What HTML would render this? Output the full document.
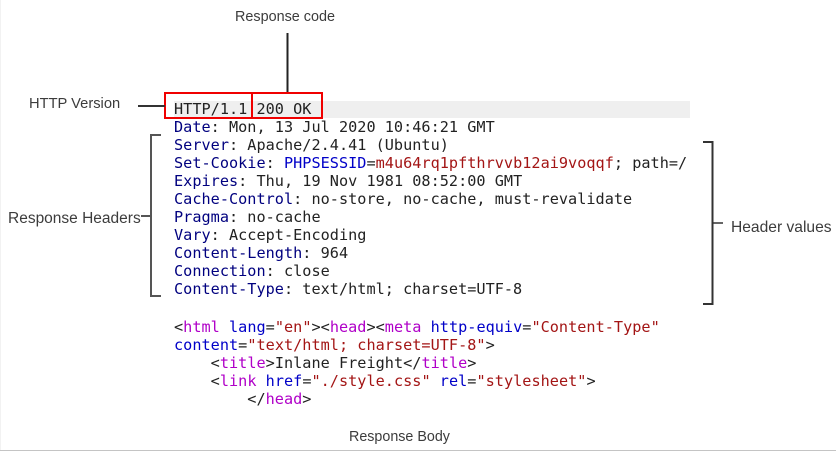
<!DOCTYPE html>
<html>
<head>
<meta charset="utf-8">
<style>
html,body{margin:0;padding:0;background:#fff;}
#p{position:relative;width:836px;height:451px;overflow:hidden;background:#fff;}
.m{position:absolute;left:174px;font:15.2px/18px "DejaVu Sans Mono",monospace;letter-spacing:.02px;color:#222;white-space:pre;filter:blur(.25px);}
.h{color:#00007f;}
.t{color:#b000c8;}
.a{color:#0000c8;}
.v{color:#a31515;}
.l{position:absolute;font-family:"Liberation Sans",sans-serif;line-height:18px;color:#3c3c3c;white-space:pre;filter:blur(.2px);}
svg{position:absolute;left:0;top:0;}
#g{position:absolute;left:174px;top:101px;width:516px;height:17px;background:#efefef;}
</style>
</head>
<body>
<div id="p">
<div id="g"></div>
<div class="l" style="left:235px;top:8px;font-size:14.4px">Response code</div>
<div class="l" style="left:29px;top:95px;font-size:14.7px">HTTP Version</div>
<div class="l" style="left:8px;top:210px;font-size:15.5px">Response Headers</div>
<div class="l" style="left:731px;top:219px;font-size:15.6px">Header values</div>
<div class="l" style="left:349px;top:428px;font-size:14.3px">Response Body</div>

<div class="m" style="top:100px">HTTP/1.1 200 OK</div>
<div class="m" style="top:118px"><span class="h">Date</span>: Mon, 13 Jul 2020 10:46:21 GMT</div>
<div class="m" style="top:136px"><span class="h">Server</span>: Apache/2.4.41 (Ubuntu)</div>
<div class="m" style="top:154px"><span class="h">Set-Cookie</span>: <span class="a">PHPSESSID</span>=<span class="v">m4u64rq1pfthrvvb12ai9voqqf</span>; path=/</div>
<div class="m" style="top:172px"><span class="h">Expires</span>: Thu, 19 Nov 1981 08:52:00 GMT</div>
<div class="m" style="top:190px"><span class="h">Cache-Control</span>: no-store, no-cache, must-revalidate</div>
<div class="m" style="top:208px"><span class="h">Pragma</span>: no-cache</div>
<div class="m" style="top:226px"><span class="h">Vary</span>: Accept-Encoding</div>
<div class="m" style="top:244px"><span class="h">Content-Length</span>: 964</div>
<div class="m" style="top:262px"><span class="h">Connection</span>: close</div>
<div class="m" style="top:280px"><span class="h">Content-Type</span>: text/html; charset=UTF-8</div>

<div class="m" style="top:318px">&lt;<span class="t">html</span> <span class="a">lang</span>=<span class="v">"en"</span>&gt;&lt;<span class="t">head</span>&gt;&lt;<span class="t">meta</span> <span class="a">http-equiv</span>=<span class="v">"Content-Type"</span></div>
<div class="m" style="top:336px"><span class="a">content</span>=<span class="v">"text/html; charset=UTF-8"</span>&gt;</div>
<div class="m" style="top:354px">    &lt;<span class="t">title</span>&gt;Inlane Freight&lt;/<span class="t">title</span>&gt;</div>
<div class="m" style="top:372px">    &lt;<span class="t">link</span> <span class="a">href</span>=<span class="v">"./style.css"</span> <span class="a">rel</span>=<span class="v">"stylesheet"</span>&gt;</div>
<div class="m" style="top:390px">        &lt;/<span class="t">head</span>&gt;</div>

<svg width="836" height="451" viewBox="0 0 836 451" fill="none">
<rect x="165" y="93" width="87" height="25" stroke="#f00000" stroke-width="2"/>
<rect x="252" y="93" width="70" height="25" stroke="#f00000" stroke-width="2"/>
<path d="M287.500 33V92" stroke="#222" stroke-width="2"/>
<path d="M138 106H165" stroke="#333" stroke-width="2"/>
<path d="M161 135H151V296H161" stroke="#555" stroke-width="2"/>
<path d="M141 216H151" stroke="#555" stroke-width="2"/>
<path d="M703 142H712.500V304H703" stroke="#333" stroke-width="2"/>
<path d="M712 223H723" stroke="#333" stroke-width="1.500"/>
<path d="M0.500 0V450" stroke="#f2f2f2" stroke-width="1"/>
<path d="M0 450.500H836" stroke="#c4c4c4" stroke-width="1"/>
</svg>
</div>
</body>
</html>
